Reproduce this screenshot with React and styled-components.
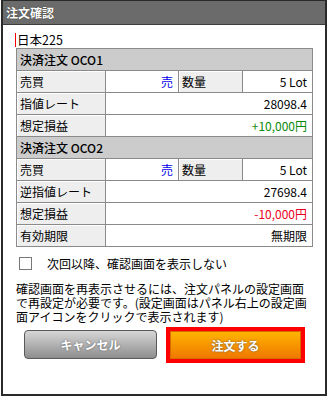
import React from "react";
import { useState } from "react";
import styled, { createGlobalStyle } from "styled-components";

const GlobalStyle = createGlobalStyle`
  html, body {
    margin: 0;
    padding: 0;
    background: #ffffff;
  }
  body {
    font-family: "Noto Sans CJK JP", "Noto Sans", sans-serif;
    font-size: 12px;
    color: #000;
  }
`;

const Panel = styled.div`
  box-sizing: border-box;
  margin-left: 1px;
  width: 326px;
  height: 396px;
  border: 2px solid #2a2a2a;
  border-top-width: 1px;
  display: flex;
  flex-direction: column;
  background: #fff;
`;

const TitleBar = styled.div`
  height: 23px;
  background: #6b6b6b;
  border-bottom: 1px solid #3c3c3c;
  display: flex;
  align-items: center;
  padding-left: 3px;
  color: #fff;
  font-weight: bold;
  font-size: 12px;
  text-shadow: 0 0 1px #222;
`;

const Body = styled.div`
  padding: 8px 12px 0 13px;
  display: flex;
  flex-direction: column;
`;

const Symbol = styled.div`
  height: 14px;
  line-height: 14px;
  margin-bottom: 1px;
  padding-left: 1px;
  margin-left: -1px;
  font-size: 12.5px;
  border-left: 1px solid #ff0000;
`;

const Table = styled.table`
  width: 296px;
  border-collapse: collapse;
  table-layout: fixed;
`;

const Cell = styled.td`
  height: 21px;
  padding: 0 5px 0 3px;
  border: 1px solid #8a8a8a;
  white-space: nowrap;
  background: ${(p) => (p.$label ? "#eeeeee" : "#ffffff")};
  text-align: ${(p) => (p.$label ? "left" : "right")};
  color: ${(p) => p.$color || "#000"};
  box-shadow: ${(p) => (p.$label ? "inset 1px 1px 0 #ffffff" : "none")};
`;

const HeaderCell = styled.td`
  height: 21px;
  padding: 0 3px;
  border: 1px solid #8a8a8a;
  background: #cccccc;
  font-weight: 500;
`;

const CheckRow = styled.label`
  display: flex;
  align-items: center;
  margin-top: 9px;
  height: 14px;
  padding-left: 3px;
  cursor: pointer;
`;

const Box = styled.span`
  box-sizing: border-box;
  width: 13px;
  height: 13px;
  border: 1px solid #777;
  background: #fff;
  margin-right: 15px;
  display: inline-flex;
  align-items: center;
  justify-content: center;
  font-size: 10px;
`;

const Note = styled.p`
  margin: 12px 0 0;
  line-height: 14px;
  white-space: nowrap;
`;

const Buttons = styled.div`
  display: flex;
  justify-content: space-between;
  margin-top: 6px;
  padding: 0 8px 0 8px;
`;

const Button = styled.button`
  box-sizing: border-box;
  width: ${(p) => (p.$primary ? "131px" : "133px")};
  height: ${(p) => (p.$primary ? "28px" : "29px")};
  margin-top: ${(p) => (p.$primary ? "1px" : "0")};
  margin-right: ${(p) => (p.$primary ? "4px" : "0")};
  border-radius: ${(p) => (p.$primary ? "0" : "4px")};
  border: 1px solid ${(p) => (p.$primary ? "#d86a00" : "#5a5a5a")};
  background: ${(p) =>
    p.$primary
      ? "linear-gradient(#ffb400, #f07800)"
      : "linear-gradient(#d6d6d6, #8e8e8e)"};
  outline: ${(p) => (p.$primary ? "4px solid #ff0000" : "none")};
  color: #fff;
  font-family: inherit;
  font-size: 12px;
  font-weight: bold;
  text-shadow: 0 0 2px #555;
  cursor: pointer;
`;

const rows1 = [
  { label: "指値レート", value: "28098.4" },
  { label: "想定損益", value: "+10,000円", color: "#0a8a0a" },
];

const rows2 = [
  { label: "逆指値レート", value: "27698.4" },
  { label: "想定損益", value: "-10,000円", color: "#ee0022" },
  { label: "有効期限", value: "無期限" },
];

function OrderBlock({ title, rows }) {
  return (
    <>
      <tr>
        <HeaderCell colSpan={4}>{title}</HeaderCell>
      </tr>
      <tr>
        <Cell $label>売買</Cell>
        <Cell $color="#0000ee">売</Cell>
        <Cell $label>数量</Cell>
        <Cell>5 Lot</Cell>
      </tr>
      {rows.map(({ label, value, color }, index) => (
        <tr key={index}>
          <Cell $label>{label}</Cell>
          <Cell colSpan={3} $color={color}>
            {value}
          </Cell>
        </tr>
      ))}
    </>
  );
}

export default function App() {
  const [hide, setHide] = useState(false);

  return (
    <>
      <GlobalStyle />
      <Panel>
        <TitleBar>注文確認</TitleBar>
        <Body>
          <Symbol>日本225</Symbol>
          <Table>
            <colgroup>
              <col style={{ width: 89 }} />
              <col style={{ width: 73 }} />
              <col style={{ width: 64 }} />
              <col style={{ width: 70 }} />
            </colgroup>
            <tbody>
              <OrderBlock title="決済注文 OCO1" rows={rows1} />
              <OrderBlock title="決済注文 OCO2" rows={rows2} />
            </tbody>
          </Table>
          <CheckRow onClick={() => setHide(!hide)}>
            <Box>{hide ? "✓" : ""}</Box>
            次回以降、確認画面を表示しない
          </CheckRow>
          <Note>
            確認画面を再表示させるには、注文パネルの設定画面
            <br />
            で再設定が必要です。(設定画面はパネル右上の設定画
            <br />
            面アイコンをクリックで表示されます)
          </Note>
          <Buttons>
            <Button>キャンセル</Button>
            <Button $primary>注文する</Button>
          </Buttons>
        </Body>
      </Panel>
    </>
  );
}
